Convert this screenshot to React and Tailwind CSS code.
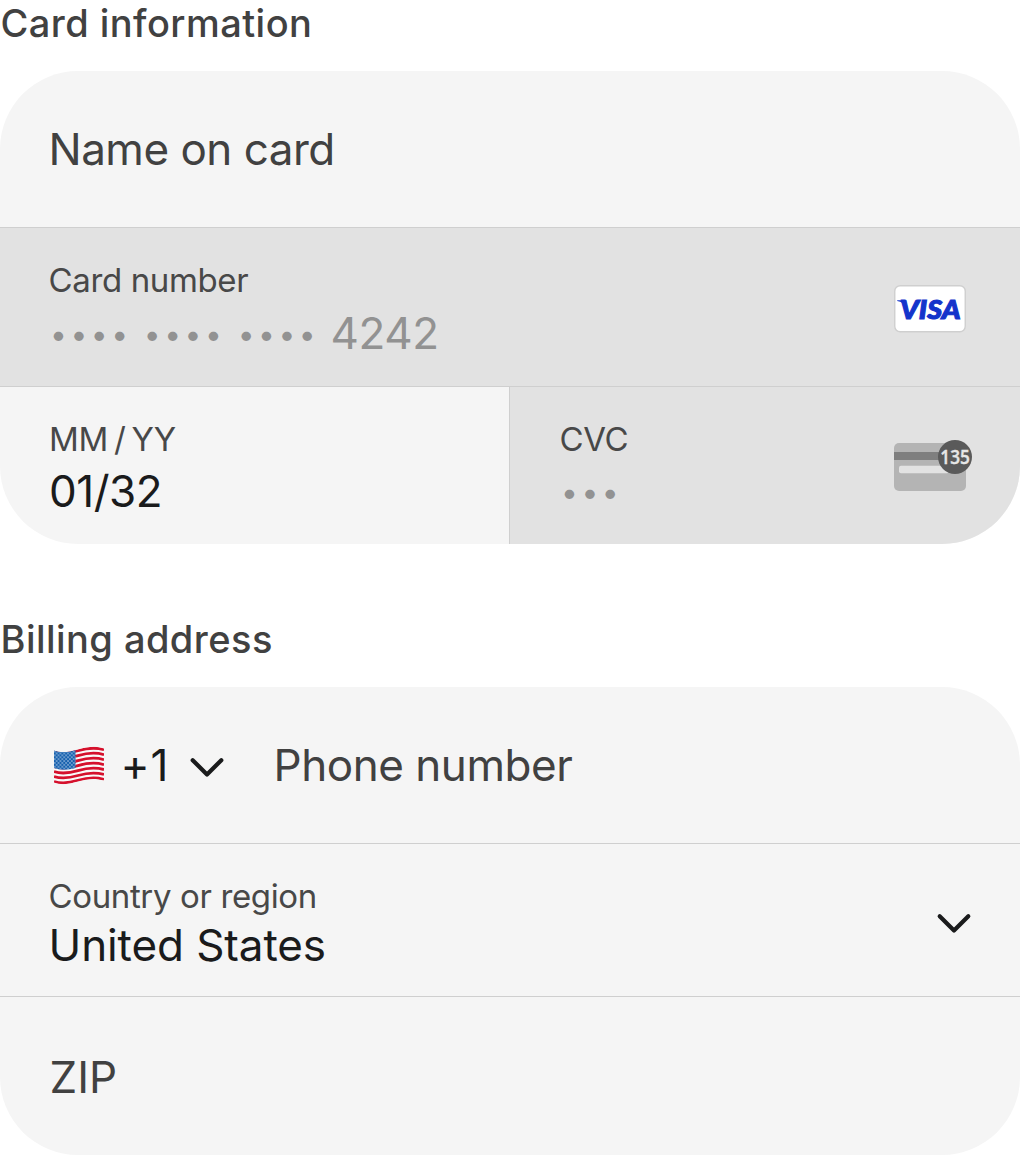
import React from "react";

const FLAG_WAVE = "c7 2.4 14 2 24 -1 s17 -3.6 26 -1";

function Flag() {
  return (
    <svg className="block h-[44px] w-[58px] shrink-0" viewBox="0 0 58 44">
      <defs>
        <clipPath id="flag-shape">
          <path d="M4 7.5 c7 2.4 14 2 24 -1 s17 -3.6 26 -1 V37.6 c-9 -2.6 -16 -2 -26 1 s-17 3.4 -24 1z" />
        </clipPath>
        <pattern id="flag-stars" width="3.8" height="3.8" patternUnits="userSpaceOnUse">
          <circle cx="0.95" cy="0.95" r="0.75" fill="#d8e6f6" />
          <circle cx="2.85" cy="2.85" r="0.75" fill="#d8e6f6" />
        </pattern>
      </defs>
      <g clipPath="url(#flag-shape)">
        <rect width="58" height="44" fill="#f8f8f8" />
        {[0, 2, 4, 6, 8, 10, 12].map((i) => (
          <path key={i} d={`M4 ${8.7 + i * 2.48} ${FLAG_WAVE}`} fill="none" stroke="#d5102c" strokeWidth="2.8" />
        ))}
        <path d="M4 7 c7 2.6 12 2.2 21.5 0 V25 c-8 2 -15 2.4 -21.5 0z" fill="#1660ad" />
        <path d="M4 7 c7 2.6 12 2.2 21.5 0 V25 c-8 2 -15 2.4 -21.5 0z" fill="url(#flag-stars)" />
      </g>
    </svg>
  );
}

function Chevron() {
  return (
    <svg className="block h-[24px] w-[36px] shrink-0" viewBox="0 0 36 24" fill="none" stroke="#1a1b1c" strokeWidth="4.2" strokeLinecap="round" strokeLinejoin="round">
      <path d="M3.7 4.2 L18 18.5 L32.3 4.2" />
    </svg>
  );
}

function VisaBadge() {
  return (
    <svg className="block h-[48px] w-[72px] shrink-0" viewBox="0 0 72 48">
      <rect x="0.75" y="0.75" width="70.5" height="46" rx="5.5" fill="#fff" stroke="#cfcfcf" strokeWidth="1.4" />
      <path d="M3.2 15.2 H10.5 L12.8 23 Q9.5 17 3.2 16z" fill="#1434cb" />
      <text x="6" y="34" textLength="60.5" lengthAdjust="spacingAndGlyphs" fill="#1434cb" stroke="#1434cb" strokeWidth="1.1" className="font-['Lato',sans-serif] text-[26px] font-black italic">VISA</text>
    </svg>
  );
}

function CvcIcon() {
  return (
    <svg className="block h-[54px] w-[80px] shrink-0" viewBox="0 0 80 54">
      <rect x="0" y="4" width="72" height="48" rx="5" fill="#b4b4b4" />
      <rect x="0" y="13" width="72" height="8" fill="#7f7f7f" />
      <rect x="5" y="26.7" width="50" height="7.5" rx="2" fill="#e2e2e2" />
      <circle cx="61" cy="18" r="17" fill="#5a5a5a" />
      <text x="46.3" y="25" textLength="29.5" lengthAdjust="spacingAndGlyphs" fill="#e6e6e6" stroke="#e6e6e6" strokeWidth="0.4" className="font-['Open_Sans',sans-serif] text-[19.5px] font-semibold">135</text>
    </svg>
  );
}

function Heading({ children }) {
  return <h2 className="h-[48px] pl-[0.5px] text-[38px] leading-[46px] font-medium tracking-[0.45px] whitespace-nowrap text-[#414141]">{children}</h2>;
}

function Label({ children }) {
  return <div className="h-[40px] text-[33px] leading-[39px] tracking-[-0.37px] whitespace-nowrap text-[#484848]">{children}</div>;
}

export default function App() {
  return (
    <main className="h-[1155px] w-[1020px] overflow-hidden bg-white font-['Inter','Liberation_Sans',sans-serif] text-[#1a1b1c] [font-feature-settings:'calt'_0]">
      <section className="h-[616px]">
        <Heading>Card information</Heading>
        <div className="mt-[23px] h-[473px] overflow-hidden rounded-[78px] bg-[#f5f5f5]">
          <div className="flex h-[156px] items-center pl-[48.5px]">
            <span className="text-[44px] tracking-[-0.5px] text-[#414141]">Name on card</span>
          </div>
          <div className="flex h-[160px] items-start justify-between border-y border-[#cfcfcf] bg-[#e2e2e2] pr-[54px] pl-[48.5px]">
            <div className="pt-[33px]">
              <Label>Card number</Label>
              <div className="flex h-[64px] items-center text-[#929292]">
                <span className="w-[282px] pt-[2px] pl-[1.5px] text-[30px] tracking-[3.5px] whitespace-pre [word-spacing:0.4px]">•••• •••• ••••</span>
                <span className="text-[44px] tracking-[-0.4px]">4242</span>
              </div>
            </div>
            <div className="pt-[57px]"><VisaBadge /></div>
          </div>
          <div className="flex h-[157px]">
            <div className="w-[509px] pt-[33px] pl-[49px]">
              <div className="[word-spacing:-2.8px]"><Label>MM / YY</Label></div>
              <div className="h-[62px] text-[44px] leading-[62px] tracking-[-0.5px]">01/32</div>
            </div>
            <div className="flex flex-1 justify-between border-l border-[#cfcfcf] bg-[#e2e2e2] pr-[46px] pl-[49.5px]">
              <div className="pt-[33px]">
                <Label>CVC</Label>
                <div className="h-[64px] pl-[1.5px] text-[30px] leading-[65px] tracking-[3.5px] text-[#929292]">•••</div>
              </div>
              <div className="pt-[52px]"><CvcIcon /></div>
            </div>
          </div>
        </div>
      </section>
      <section>
        <Heading>Billing address</Heading>
        <div className="mt-[23px] h-[468px] overflow-hidden rounded-[78px] bg-[#f5f5f5]">
          <div className="flex h-[156px] items-center pl-[50px]">
            <Flag />
            <span className="ml-[12.5px] w-[68.5px] text-[44px] tracking-[1px]">+1</span>
            <div className="pt-[5px]"><Chevron /></div>
            <span className="ml-[48.5px] text-[44px] tracking-[-0.45px] text-[#414141]">Phone number</span>
          </div>
          <div className="flex h-[154px] items-start justify-between border-y border-[#cfcfcf] pr-[48px] pl-[48.5px]">
            <div className="pt-[33px]">
              <Label>Country or region</Label>
              <div className="h-[60px] text-[44px] leading-[57px] tracking-[-0.1px]">United States</div>
            </div>
            <div className="pt-[68px]"><Chevron /></div>
          </div>
          <div className="flex h-[158px] items-center pt-[2px] pl-[49.5px]">
            <span className="text-[44px] text-[#414141]">ZIP</span>
          </div>
        </div>
      </section>
    </main>
  );
}
